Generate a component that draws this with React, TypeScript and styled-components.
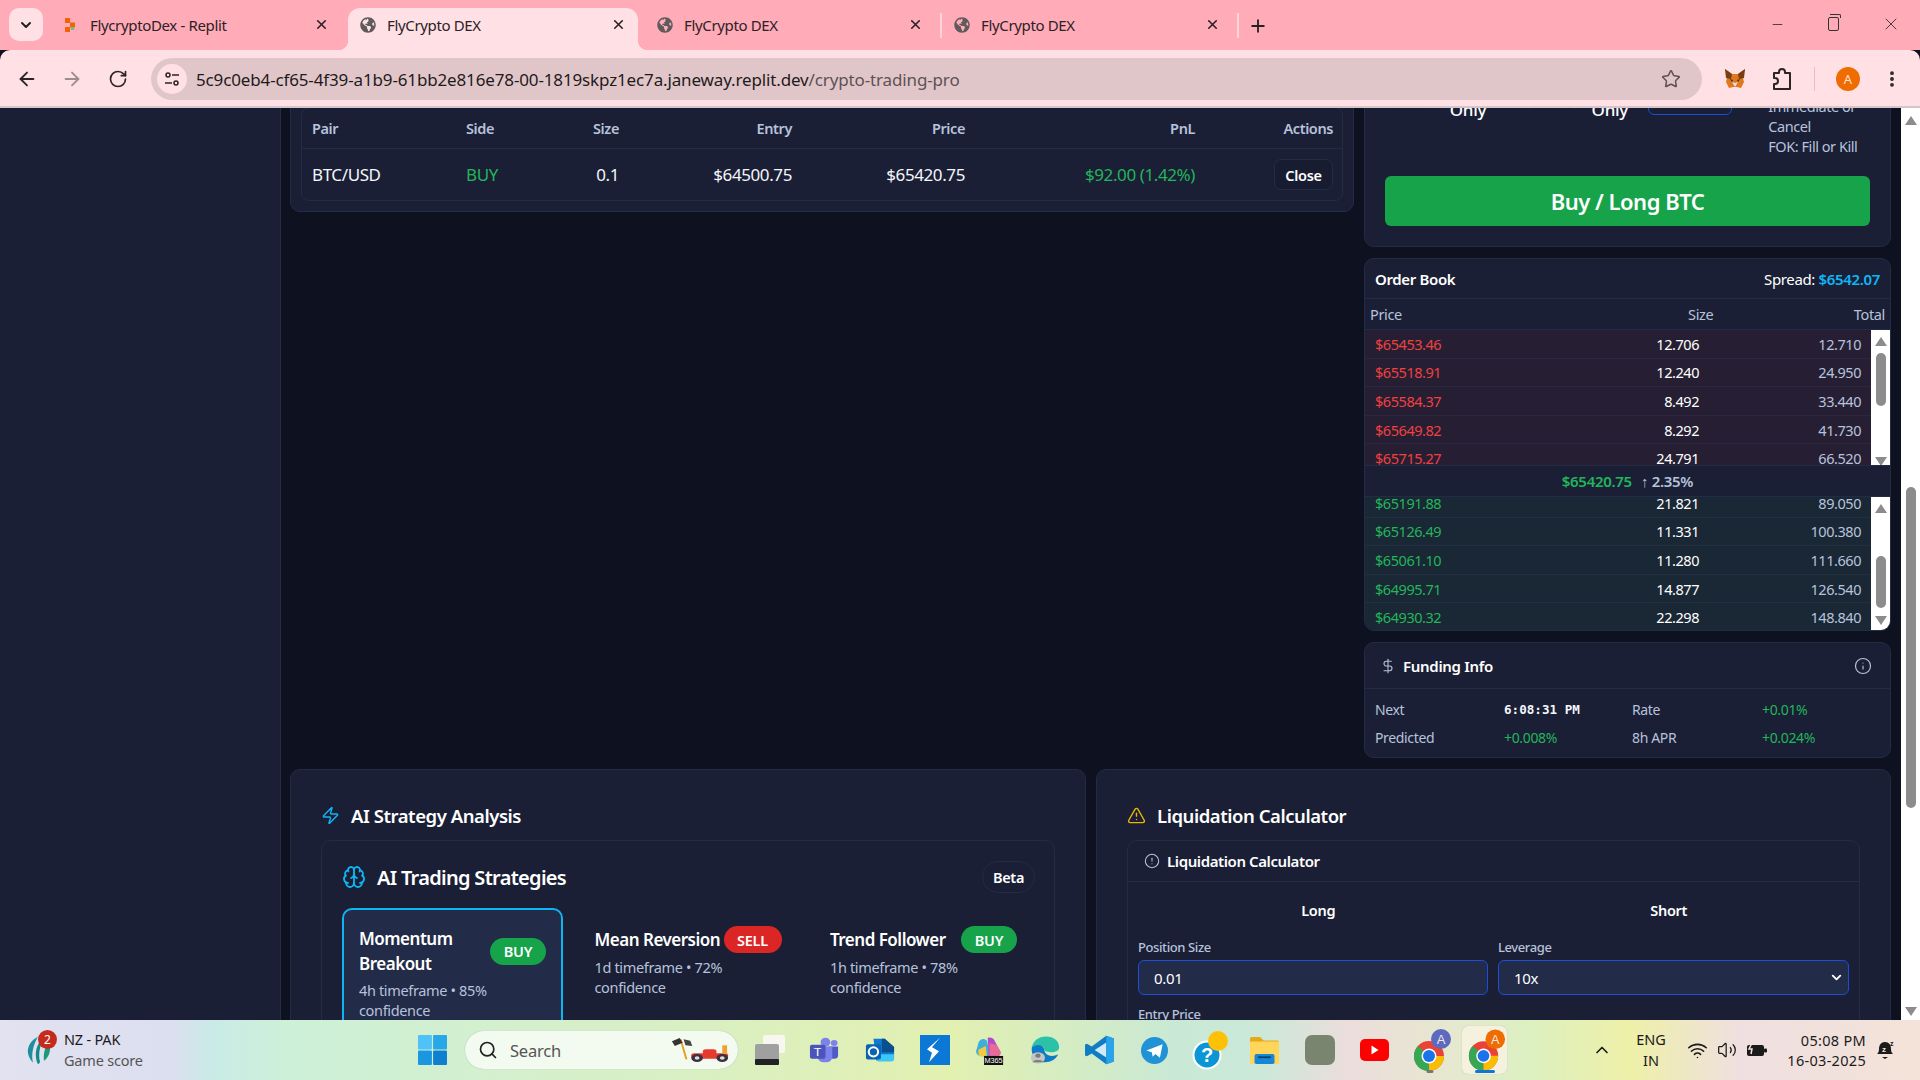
import React from 'react';
import styled, { createGlobalStyle } from 'styled-components';
import { ArrowLeft, ArrowRight, RotateCw, Star, MoreVertical, X, Plus, Minus, ChevronDown, ChevronUp, Zap, Brain, TriangleAlert, CircleAlert, Info, DollarSign, Search as SearchIcon, Wifi, Volume2 } from 'lucide-react';
import { FaGlobeAmericas } from 'react-icons/fa';

const Global = createGlobalStyle`
  html, body { margin: 0; padding: 0; background: #0e1220; }
  * { box-sizing: border-box; }
  body { font-family: "Noto Sans", sans-serif; overflow: hidden; }
`;

const Screen = styled.div`
  width: 1920px; height: 1080px; overflow: hidden;
  display: grid; grid-template-rows: 50px 58px 912px 60px;
`;

/* ---------- browser chrome ---------- */
const TabStrip = styled.div`
  background: #ffabb8; display: flex; align-items: flex-end; padding-left: 9px; position: relative;
`;
const GroupButton = styled.div`
  width: 34px; height: 33px; margin: 0 8px 9px 0; border-radius: 10px; background: #ffe0e5;
  display: flex; align-items: center; justify-content: center; color: #222;
`;
const Tab = styled.div<{ $active?: boolean; $sep?: boolean }>`
  width: ${p => (p.$active ? 290 : 297)}px; height: 42px; display: flex; align-items: center;
  padding: 0 ${p => (p.$active ? 12 : 19)}px 9px 12px; gap: 11px;
  margin-right: ${p => (p.$active ? 7 : 0)}px;
  font-size: 15px; letter-spacing: -0.35px; color: #2c2226; position: relative;
  background: ${p => (p.$active ? '#ffe0e5' : 'transparent')};
  border-radius: 12px 12px 0 0;
  ${p => p.$active ? `
    &::before, &::after { content: ''; position: absolute; bottom: 0; width: 10px; height: 10px; }
    &::before { left: -10px; background: radial-gradient(circle at 0 0, transparent 10px, #ffe0e5 10.5px); }
    &::after { right: -10px; background: radial-gradient(circle at 100% 0, transparent 10px, #ffe0e5 10.5px); }
  ` : ''}
  ${p => p.$sep ? `&::after { content: ''; position: absolute; right: 0; top: 5px; width: 2px; height: 25px; background: #ffd4db; }` : ''}
`;
const TabTitle = styled.span` flex: 1; `;
const NewTab = styled.div` margin: 0 0 11px 9px; display: flex; color: #222; height: 26px; align-items: center; `;
const WindowControls = styled.div`
  margin-left: auto; display: flex; align-self: flex-start; color: #333; height: 48px; align-items: center;
`;
const WindowButton = styled.div<{ $w: number }>`
  width: ${p => p.$w}px; display: flex; justify-content: center; align-items: center;
`;
const RestoreGlyph = styled.div`
  width: 11px; height: 14px; border: 1.4px solid #333; border-radius: 2px; position: relative;
  &::before { content: ''; position: absolute; left: 1px; top: -4px; width: 10px; height: 3px; border: 1.2px solid #333; border-bottom: 0; border-left: 0; border-radius: 0 2px 0 0; }
`;
const Toolbar = styled.div`
  background: #ffe0e5; border-radius: 10px 10px 0 0; border-bottom: 2px solid #d8c5c9;
  display: flex; align-items: center; color: #2b2326; padding: 2px 0 0 16px;
`;
const NavIcon = styled.div<{ $dim?: boolean; $w: number }>`
  width: ${p => p.$w}px; display: flex; justify-content: flex-start; color: ${p => (p.$dim ? '#9c8d90' : '#2b2326')};
`;
const AddressBar = styled.div`
  width: 1551px; height: 42px; border-radius: 21px; background: #e1c6c9;
  display: flex; align-items: center; padding: 0 21px 0 6px; font-size: 17px; letter-spacing: -0.14px; color: #1f1a1b;
`;
const SiteChip = styled.div`
  width: 30px; height: 30px; border-radius: 50%; background: #ffe0e5; display: flex; align-items: center; justify-content: center; margin-right: 9px;
`;
const UrlPath = styled.span` color: #5d5254; `;
const StarSlot = styled.div` margin-left: auto; display: flex; color: #5d5254; `;
const ExtArea = styled.div` display: flex; align-items: center; margin-left: 22px; `;
const ExtSlot = styled.div<{ $w: number }>` width: ${p => p.$w}px; display: flex; align-items: center; `;
const ToolbarDivider = styled.div` width: 1px; height: 24px; background: #f5b9c3; margin: 0 21px 0 14px; `;
const Avatar = styled.div`
  width: 24px; height: 24px; border-radius: 50%; background: #ef6c00; color: #ffe0d0; font-size: 13px; display: flex; align-items: center; justify-content: center; margin-right: 22px;
`;

/* ---------- page ---------- */
const Page = styled.div` display: grid; grid-template-columns: 281px 1fr 19px; min-height: 0; overflow: hidden; background: #0e1220; `;
const Sidebar = styled.div` background: #1a1f35; border-right: 1px solid #242b45; `;
const Viewport = styled.div` overflow: hidden; padding: 0 11px 0 9px; `;
const Scrolled = styled.div` margin-top: -60px; display: flex; flex-direction: column; gap: 11px; `;
const TopGrid = styled.div` display: grid; grid-template-columns: 1064px 527px; gap: 10px; align-items: start; `;
const RightCol = styled.div` display: flex; flex-direction: column; gap: 11px; `;
const Card = styled.div`
  background: #1a1f35; border: 1px solid #242b45; border-radius: 10px; color: #fff; overflow: hidden;
`;
const PositionsCard = styled(Card)` padding: 10px 10px 10px 10px; `;
const PositionsTitle = styled.div` height: 48px; font-size: 18px; font-weight: 600; `;
const TableBox = styled.div` border: 1px solid #242b45; border-radius: 8px; `;
const TableRow = styled.div<{ $head?: boolean }>`
  display: grid; grid-template-columns: 154px 84px 87px 173px 173px 230px 138px;
  align-items: center; height: ${p => (p.$head ? 41 : 51)}px; font-size: ${p => (p.$head ? 14.5 : 17)}px; letter-spacing: -0.4px;
  ${p => p.$head ? `font-weight: 600; color: #b7c2dc; border-bottom: 1px solid #242b45;` : `color: #f4f6fb;`}
`;
const Cell = styled.div<{ $right?: boolean; $green?: boolean }>`
  padding: 0 8px 0 10px; text-align: ${p => (p.$right ? 'right' : 'left')}; ${p => p.$green ? 'color: #22b55a;' : ''}
`;
const CloseButton = styled.button`
  font: 600 14.5px "Noto Sans", sans-serif; letter-spacing: -0.3px; color: #fff; background: #171c30; border: 1px solid #242b45; border-radius: 7px;
  width: 59px; height: 31px; padding: 0;
`;

const FormCard = styled(Card)` padding: 48px 20px 20px; `;
const OptionRow = styled.div` display: flex; align-items: flex-start; padding-left: 4px; height: 60px; `;
const OptionGroup = styled.div<{ $w: number }>` display: flex; width: ${p => p.$w}px; `;
const Toggle = styled.div` width: 43px; height: 13px; background: #171c30; border-radius: 6px; `;
const OptionLabel = styled.div`
  width: 72px; text-align: center; font-size: 17px; font-weight: 500; line-height: 20px; margin-top: -17px; letter-spacing: -.3px;
`;
const TifSelect = styled.div` width: 86px; height: 18px; border: 1px solid #1d4ed8; border-radius: 6px; background: #1a1f35; `;
const HelpText = styled.div` width: 104px; margin: -1px 0 0 36px; font-size: 14.5px; line-height: 20px; color: #b7c2dc; letter-spacing: -.45px; white-space: nowrap; `;
const SubmitButton = styled.button`
  width: 100%; height: 50px; margin-top: 19px; background: #16a34a; border: 0; border-radius: 6px; color: #fff;
  font: 600 22px "Noto Sans", sans-serif; letter-spacing: -0.5px;
`;

const BookHeader = styled.div`
  height: 40px; border-bottom: 1px solid #242b45; display: flex; justify-content: space-between; align-items: center; padding: 0 10px; font-size: 15px; letter-spacing: -0.35px;
`;
const BookTitle = styled.span` font-weight: 600; `;
const Cyan = styled.span` color: #10b5f5; font-weight: 600; `;
const ThreeCols = styled.div`
  display: grid; grid-template-columns: repeat(3, 1fr); align-items: center;
`;
const BookColumns = styled(ThreeCols)`
  height: 31px; padding: 0 5px; font-size: 14.5px; letter-spacing: -0.35px; color: #b7c2dc; border-bottom: 1px solid #242b45;
`;
const Right = styled.div` text-align: right; `;
const BookSide = styled.div<{ $h: number }>` display: grid; grid-template-columns: 1fr 19px; height: ${p => p.$h}px; overflow: hidden; `;
const BookRows = styled.div<{ $shift?: number }>` margin-top: ${p => p.$shift ?? 0}px; `;
const BookRow = styled(ThreeCols)<{ $ask?: boolean }>`
  height: 28.6px; padding: 0 10px; font-size: 14.5px; letter-spacing: -0.45px;
  background: ${p => (p.$ask ? '#261f33' : '#1a2735')};
  border-bottom: 1px solid ${p => (p.$ask ? '#2d2640' : '#222f42')};
`;
const BookPrice = styled.div<{ $ask?: boolean }>` color: ${p => (p.$ask ? '#f04040' : '#22b55a')}; `;
const BookTotal = styled(Right)` color: #b7c2dc; `;
const BookMid = styled.div`
  height: 32px; border-top: 1px solid #242b45; border-bottom: 1px solid #242b45; display: flex; align-items: center; justify-content: center; gap: 9px;
  font-size: 15px; font-weight: 600; letter-spacing: -0.3px; color: #b7c2dc; padding-right: 0;
`;
const MidPrice = styled.span` color: #22b55a; `;
const ScrollTrack = styled.div` background: #fff; display: grid; grid-template-rows: 22px 1fr 22px; justify-items: center; align-items: center; min-height: 0; `;
const ScrollThumb = styled.div<{ $top: number; $len: number }>`
  width: 10px; height: ${p => p.$len}px; margin-top: ${p => p.$top}px; align-self: start; background: #8c8c8c; border-radius: 5px;
`;
const Arrow = styled.div<{ $down?: boolean }>`
  width: 0; height: 0; border-left: 6.5px solid transparent; border-right: 6.5px solid transparent;
  ${p => (p.$down ? 'border-top: 9px solid #8c8c8c;' : 'border-bottom: 9px solid #8c8c8c;')}
`;
const PageScrollbar = styled(ScrollTrack)` grid-template-rows: 24px 1fr 18px; `;

const FundingHeader = styled.div`
  height: 46px; border-bottom: 1px solid #242b45; display: flex; align-items: center; padding: 0 18px 0 15px; gap: 7px;
  font-size: 15px; font-weight: 600; letter-spacing: -0.3px; color: #b7c2dc;
`;
const FundingTitle = styled.span` color: #fff; flex: 1; `;
const FundingGrid = styled.div`
  display: grid; grid-template-columns: 129px 128px 130px 1fr; grid-auto-rows: 28px; align-items: center; padding: 6px 10px 6px; font-size: 14px; letter-spacing: -0.35px; color: #b7c2dc;
`;
const GreenValue = styled.div` color: #22b55a; `;
const Clock = styled.div` font: 700 12.6px "DejaVu Sans Mono", monospace; letter-spacing: 0; color: #f4f6fb; `;

const BottomGrid = styled.div` display: grid; grid-template-columns: 796px 795px; gap: 10px; height: 300px; `;
const LargeCard = styled(Card)` padding: 29px 30px 0 30px; `;
const LargeTitle = styled.div`
  display: flex; align-items: center; gap: 11px; font-size: 18.5px; font-weight: 600; height: 32px; letter-spacing: -0.45px;
`;
const InnerCard = styled.div`
  margin-top: 9px; border: 1px solid #242b45; border-radius: 10px; height: 300px;
`;
const StrategyHeader = styled.div`
  display: flex; align-items: center; justify-content: space-between; padding: 19px 19px 14px 20px; height: 67px;
`;
const StrategyTitle = styled.div` display: flex; align-items: center; gap: 11px; font-size: 20px; font-weight: 600; letter-spacing: -0.7px; `;
const BetaBadge = styled.div`
  width: 53px; height: 32px; border: 1px solid #242b45; border-radius: 16px; display: flex; align-items: center; justify-content: center; font-size: 14.5px; font-weight: 600; letter-spacing: -.3px;
`;
const StrategyGrid = styled.div` display: grid; grid-template-columns: repeat(3, 221px); gap: 14.5px; padding: 0 20px; `;
const StrategyCard = styled.div<{ $selected?: boolean }>`
  border-radius: 10px; padding: 16px 15px; height: 140px; border: 2px solid ${p => (p.$selected ? '#0fb5f0' : 'transparent')};
  background: ${p => (p.$selected ? '#222b47' : 'transparent')};
`;
const StrategyHead = styled.div` display: flex; justify-content: space-between; align-items: center; gap: 2px; `;
const StrategyName = styled.div` font-size: 17px; font-weight: 600; line-height: 25px; letter-spacing: -0.5px; `;
const SignalBadge = styled.div<{ $sell?: boolean }>`
  flex: none; width: ${p => (p.$sell ? 58 : 56)}px; height: 27px; border-radius: 14px; background: ${p => (p.$sell ? '#dc2626' : '#16a34a')};
  display: flex; align-items: center; justify-content: center; font-size: 14.5px; font-weight: 600; letter-spacing: -.2px;
`;
const StrategyMeta = styled.div` margin-top: 4px; font-size: 14.5px; line-height: 20px; color: #b7c2dc; letter-spacing: -0.35px; `;

const LiqHeader = styled.div`
  height: 41px; border-bottom: 1px solid #242b45; display: flex; align-items: center; gap: 7px; padding: 0 16px; font-size: 15px; font-weight: 600; letter-spacing: -0.4px;
`;
const LiqBody = styled.div` padding: 0 10px; `;
const LiqTabs = styled.div`
  display: grid; grid-template-columns: 1fr 1fr; margin: 0 5px; height: 56px; align-items: center; text-align: center; font-size: 14.5px; font-weight: 600; letter-spacing: -.3px;
`;
const LiqFields = styled.div` display: grid; grid-template-columns: 350px 351px; gap: 10px 10px; `;
const Field = styled.div` display: flex; flex-direction: column; `;
const FieldLabel = styled.div` font-size: 13px; font-weight: 500; line-height: 18px; color: #b7c2dc; letter-spacing: -0.4px; margin-bottom: 4px; `;
const FieldBox = styled.div`
  height: 35px; border: 1px solid #1d4ed8; border-radius: 6px; background: #222b47; display: flex; align-items: center; justify-content: space-between;
  padding: 0 4px 0 15px; font-size: 15px; letter-spacing: -.3px;
`;

/* ---------- taskbar ---------- */
const Taskbar = styled.div`
  display: flex; align-items: center; position: relative;
  background: linear-gradient(90deg, #e2e2f0 0, #dcdff0 170px, #c9ebe6 215px, #cdf0d8 290px, #d8efc6 650px, #e2f0b0 950px, #c9e9d6 1180px, #cbe8d8 1260px, #ecdddc 1350px, #e6e8cf 1450px, #dcf0c0 1530px, #eef0a8 1630px, #efdfe0 1740px, #f3e3d8 1920px);
`;
const WidgetArea = styled.div` width: 405px; display: flex; align-items: center; padding-left: 26px; gap: 12px; `;
const WidgetLogo = styled.div` position: relative; width: 26px; height: 40px; display: flex; align-items: center; `;
const NotifBadge = styled.div`
  position: absolute; left: 12px; top: 0; width: 19px; height: 19px; border-radius: 50%; background: #c42b1c; color: #fff; font-size: 12px; display: flex; align-items: center; justify-content: center;
`;
const WidgetText = styled.div` font-size: 14.5px; line-height: 21px; color: #1b1b1b; letter-spacing: -.2px; `;
const WidgetSub = styled.div` color: #555; `;
const StartSlot = styled.div` width: 55px; margin-right: 5px; display: flex; justify-content: center; `;
const SearchPill = styled.div`
  width: 273px; height: 38px; margin-right: 4px; border-radius: 19px; background: #f3faf0; box-shadow: 0 0 1px #9aa; display: flex; align-items: center; padding: 0 8px 0 13px; gap: 12px; font-size: 16.5px; color: #555; letter-spacing: -.2px;
`;
const SearchLabel = styled.span` flex: 1; `;
const AppSlot = styled.div<{ $active?: boolean }>`
  width: ${p => (p.$active ? 45 : 55)}px; height: ${p => (p.$active ? 48 : 56)}px; margin: 0 ${p => (p.$active ? 5 : 0)}px;
  display: flex; align-items: center; justify-content: center; position: relative; border-radius: 6px;
  ${p => p.$active ? 'background: #f5f1df; box-shadow: 0 0 1px #aaa;' : ''}
`;
const RunDot = styled.div<{ $active?: boolean }>`
  position: absolute; left: 50%; bottom: ${p => (p.$active ? 1 : 5)}px; transform: translateX(-50%); height: 3px; border-radius: 2px;
  width: ${p => (p.$active ? 20 : 7)}px; background: ${p => (p.$active ? '#0a78d4' : '#777')};
`;
const Tray = styled.div` margin-left: 80px; display: flex; align-items: center; color: #1b1b1b; `;
const LangBlock = styled.div` width: 62px; margin-left: 8px; text-align: center; font-size: 14.5px; line-height: 21px; `;
const TraySlot = styled.div<{ $w: number }>` width: ${p => p.$w}px; display: flex; justify-content: center; align-items: center; `;
const ClockBlock = styled.div` width: 88px; margin-left: 6px; text-align: right; font-size: 14.5px; line-height: 20px; letter-spacing: .3px; white-space: nowrap; `;

/* ---------- drawings ---------- */
const ReplitLogo = () => (
  <svg width="16" height="16" viewBox="0 0 16 16"><rect x="2" y="1" width="5" height="5" fill="#f26207"/><rect x="7" y="5.5" width="5" height="5" fill="#f26207"/><rect x="2" y="10" width="5" height="5" fill="#f26207"/><rect x="8" y="10" width="3" height="3" fill="#5fc77a"/></svg>
);
const TuneIcon = () => (
  <svg width="16" height="16" viewBox="0 0 16 16" fill="none" stroke="#2b2326" strokeWidth="1.5"><circle cx="4" cy="4" r="2"/><path d="M8 4h7M1 12h7"/><circle cx="12" cy="12" r="2"/></svg>
);
const Fox = () => (
  <svg width="22" height="22" viewBox="0 0 22 22"><path d="M1 1l7 5h6l7-5-2 9 1 4-3 6-4-1h-4l-4 1-3-6 1-4z" fill="#e2761b"/><path d="M1 1l7 5-1 5-5-1zM21 1l-7 5 1 5 5-1z" fill="#763d16"/><path d="M8 14l3 5 3-5-3 1z" fill="#e4e4e4"/><path d="M6 11l3 1-1 2zM16 11l-3 1 1 2z" fill="#233447"/></svg>
);
const ChromePuzzle = () => (
  <svg width="24" height="24" viewBox="0 0 24 24" fill="none" stroke="#2b2326" strokeWidth="2" strokeLinejoin="round"><path d="M4 6h5V5a3 3 0 016 0v1h5v16H4v-5h1a3 3 0 000-6H4z"/></svg>
);
const CricketLogo = () => (
  <svg width="26" height="30" viewBox="0 0 26 36" preserveAspectRatio="none"><path d="M12 2C5 6 1 14 2 22c.5 4 3 9 5 11C5 24 7 12 12 2z" fill="#1f8fa0"/><path d="M18 3c-6 5-9 15-8 24 .2 3 1 6 2 8 1-1 2-2 2-3-2-9 0-20 4-29z" fill="#148a86"/><path d="M23 8c-4 6-6 14-5 23 3-3 6-8 6-14 0-3 0-6-1-9z" fill="#1a9a7a"/></svg>
);
const WinLogo = () => (
  <svg width="29" height="30" viewBox="0 0 30 30" preserveAspectRatio="none"><rect x="0" y="0" width="14.4" height="14.4" rx="1" fill="#4fc3f7"/><rect x="15.6" y="0" width="14.4" height="14.4" rx="1" fill="#29a8e8"/><rect x="0" y="15.6" width="14.4" height="14.4" rx="1" fill="#1a97e0"/><rect x="15.6" y="15.6" width="14.4" height="14.4" rx="1" fill="#0f7fd0"/></svg>
);
const RaceCar = () => (
  <svg width="60" height="28" viewBox="0 0 62 42" preserveAspectRatio="none"><path d="M11 5l6 30" stroke="#e0a020" strokeWidth="2"/><path d="M2 8l8-5 3 7-8 5z" fill="#333"/><path d="M14 5l7 2 2 8-7-1z" fill="#444"/><rect x="22" y="26" width="38" height="8" rx="3" fill="#e63a2e"/><rect x="34" y="20" width="14" height="8" rx="3" fill="#e63a2e"/><rect x="54" y="14" width="5" height="13" fill="#f0a030"/><circle cx="28" cy="33" r="6" fill="#3a2f3f"/><circle cx="28" cy="33" r="2.5" fill="#ddd"/><circle cx="54" cy="33" r="6" fill="#3a2f3f"/><circle cx="54" cy="33" r="2.5" fill="#ddd"/></svg>
);
const WidgetsTile = () => (
  <svg width="30" height="30" viewBox="0 0 30 30"><rect x="8" y="0" width="22" height="18" rx="2" fill="#f7f7f0"/><rect x="0" y="9" width="24" height="20" rx="2" fill="#a0a0a0"/><rect x="0" y="24" width="24" height="6" rx="1" fill="#222"/></svg>
);
const Teams = () => (
  <svg width="31" height="28" viewBox="0 0 32 32" preserveAspectRatio="none"><circle cx="26" cy="8" r="3.5" fill="#7b83eb"/><circle cx="17" cy="7" r="5" fill="#7b83eb"/><path d="M20 12h10v10a4 4 0 01-4 4h-2z" fill="#5059c9"/><path d="M9 12h15v12a6 6 0 01-6 6h-3a6 6 0 01-6-6z" fill="#7b83eb"/><rect x="1" y="10" width="16" height="16" rx="2" fill="#4b53bc"/><text x="9" y="23" fontSize="13" fill="#fff" textAnchor="middle" fontFamily="Liberation Sans">T</text></svg>
);
const Outlook = () => (
  <svg width="30" height="29" viewBox="0 0 32 32" preserveAspectRatio="none"><path d="M9 3l12 0 10 9v12a3 3 0 01-3 3H12z" fill="#0f78d4"/><path d="M10 20h21v5a3 3 0 01-3 3H14z" fill="#3cc8f5"/><path d="M18 3h3l10 9v6H18z" fill="#0a4e8c"/><rect x="1" y="9" width="16" height="17" rx="2" fill="#0a64b4"/><circle cx="9" cy="17.5" r="5" fill="none" stroke="#fff" strokeWidth="2.2"/></svg>
);
const BlueS = () => (
  <svg width="30" height="30" viewBox="0 0 30 44" preserveAspectRatio="none"><rect width="30" height="44" fill="#0a78d4"/><path d="M20 4l-8 14 7 6-10 16 3-14-5-5z" fill="#fff"/></svg>
);
const M365 = () => (
  <svg width="31" height="29" viewBox="0 0 32 32"><path d="M4 7c2-4 6-5 9-2l4 17H8c-6 0-8-4-6-8z" fill="#3bb0d9"/><path d="M14 2c4-1 7 1 8 4l6 11c1 4-2 6-6 6h-7z" fill="#b04bd0"/><path d="M16 8l8 2 4 7c1 3-2 6-6 6h-6z" fill="#e96a9a"/><path d="M4 15l8-4 1 12H8c-4 0-5-4-4-8z" fill="#f5c842"/><rect x="10" y="22" width="21" height="10" fill="#111"/><text x="20.5" y="30" fontSize="8" fill="#fff" textAnchor="middle" fontFamily="Liberation Sans">M365</text></svg>
);
const Edge = () => (
  <svg width="30" height="30" viewBox="0 0 34 42" preserveAspectRatio="none"><path d="M2 18C3 8 10 2 18 2c9 0 15 6 15 15 0 5-4 7-9 7-6 0-8-2-8-4 0-4-4-6-8-4-3 1-5 3-6 2z" fill="#2cc2a8"/><path d="M2 18c3-4 8-5 11-3 4 2 2 8 6 12 3 3 8 3 13 0-3 8-10 12-17 11C7 37 1 28 2 18z" fill="#0c7cc7"/><circle cx="9" cy="32" r="8" fill="#c5c5c5"/><circle cx="9" cy="29" r="3" fill="#7b7b7b"/><path d="M3 38c1-4 11-4 12 0z" fill="#7b7b7b"/></svg>
);
const VSCode = () => (
  <svg width="29" height="30" viewBox="0 0 30 44" preserveAspectRatio="none"><path d="M22 1l8 4v34l-8 4L7 27 2 31l-2-1V14l2-1 5 4z" fill="#0f7cc4"/><path d="M22 11L10 22l12 11z" fill="#cfeaf8"/><path d="M22 1l8 4v34l-8 4z" fill="#2aa4e8"/></svg>
);
const Telegram = () => (
  <svg width="27" height="27" viewBox="0 0 30 30"><circle cx="15" cy="15" r="15" fill="#1f93d6"/><path d="M6 15l18-7-3 15-5-4-3 3-1-5z" fill="#fff"/></svg>
);
const HelpApp = () => (
  <svg width="36" height="40" viewBox="0 0 36 40"><circle cx="15" cy="25" r="13.5" fill="#0a96d6" stroke="#fff" strokeWidth="2"/><text x="15" y="32" fontSize="20" fontWeight="700" fill="#fff" textAnchor="middle" fontFamily="Liberation Sans">?</text><circle cx="26" cy="11" r="10" fill="#ffc107"/></svg>
);
const Folder = () => (
  <svg width="29" height="27" viewBox="0 0 32 30" preserveAspectRatio="none"><path d="M0 2a2 2 0 012-2h9l4 4h15a2 2 0 012 2v5H0z" fill="#e6a817"/><rect y="5" width="32" height="25" rx="1" fill="#ffd55a"/><rect x="5" y="19" width="22" height="11" rx="2" fill="#1587d6"/><rect x="9" y="21.5" width="14" height="2" fill="#0b3f70"/></svg>
);
const GreyTile = styled.div` width: 30px; height: 30px; border-radius: 7px; background: #7a8570; `;
const YouTube = () => (
  <svg width="29" height="22" viewBox="0 0 29 22"><rect width="29" height="22" rx="5" fill="#f00"/><path d="M11.5 6.5l7 4.5-7 4.5z" fill="#fff"/></svg>
);
const ChromeBadged = ({ color }: { color: string }) => (
  <svg width="46" height="42" viewBox="0 0 46 42"><circle cx="22" cy="27" r="15" fill="#ea4335"/><path d="M22 27L9 35a15 15 0 0013 7z" fill="#34a853"/><path d="M22 42a15 15 0 0015-15H22z" fill="#fbbc04"/><path d="M9 35a15 15 0 01-2-8 15 15 0 014-10l11 10z" fill="#34a853"/><circle cx="22" cy="27" r="7.5" fill="#fff"/><circle cx="22" cy="27" r="6" fill="#1a73e8"/><circle cx="34" cy="10" r="10" fill={color}/><text x="34" y="15" fontSize="13" fill="#f4e4e4" textAnchor="middle" fontFamily="Liberation Sans">A</text></svg>
);
const Battery = () => (
  <svg width="22" height="18" viewBox="0 0 22 18"><rect x="1" y="4" width="17" height="11" rx="2" fill="#1b1b1b"/><rect x="18" y="7.5" width="3" height="4" rx="1" fill="#1b1b1b"/><path d="M7 0L3 8h3l-1 5" stroke="#f3e3d8" strokeWidth="1.5" fill="none"/></svg>
);
const Bell = () => (
  <svg width="18" height="20" viewBox="0 0 18 20"><path d="M9 2c-4 0-6 3-6 7 0 3-1 4-2 5h16c-1-1-2-2-2-5 0-4-2-7-6-7z" fill="#1b1b1b"/><path d="M6 17h6l-3 2z" fill="#1b1b1b"/><text x="8" y="12" fontSize="8" fontWeight="700" fill="#f3e3d8" textAnchor="middle" fontFamily="Liberation Sans">z</text><text x="14" y="6" fontSize="7" fontWeight="700" fill="#1b1b1b" fontFamily="Liberation Sans">z</text></svg>
);

/* ---------- data ---------- */
const asks = [['$65453.46', '12.706', '12.710'], ['$65518.91', '12.240', '24.950'], ['$65584.37', '8.492', '33.440'], ['$65649.82', '8.292', '41.730'], ['$65715.27', '24.791', '66.520']];
const bids = [['$65191.88', '21.821', '89.050'], ['$65126.49', '11.331', '100.380'], ['$65061.10', '11.280', '111.660'], ['$64995.71', '14.877', '126.540'], ['$64930.32', '22.298', '148.840']];
const tabs = [
  { title: 'FlycryptoDex - Replit', replit: true },
  { title: 'FlyCrypto DEX', active: true },
  { title: 'FlyCrypto DEX', sep: true },
  { title: 'FlyCrypto DEX', sep: true },
];

const Scrollbar = ({ top, len }: { top: number; len: number }) => (
  <ScrollTrack><Arrow /><ScrollThumb $top={top} $len={len} /><Arrow $down /></ScrollTrack>
);

const Rows = ({ data, ask }: { data: string[][]; ask?: boolean }) => (
  <>
    {data.map(r => (
      <BookRow key={r[0]} $ask={ask}>
        <BookPrice $ask={ask}>{r[0]}</BookPrice>
        <Right>{r[1]}</Right>
        <BookTotal>{r[2]}</BookTotal>
      </BookRow>
    ))}
  </>
);

export default function App() {
  return (
    <Screen>
      <Global />
      <TabStrip>
        <GroupButton><ChevronDown size={16} strokeWidth={3} /></GroupButton>
        {tabs.map((t, i) => (
          <Tab key={i} $active={t.active} $sep={t.sep}>
            {t.replit ? <ReplitLogo /> : <FaGlobeAmericas size={16} color="#5f5a5c" />}
            <TabTitle>{t.title}</TabTitle>
            <X size={15} strokeWidth={2.6} />
          </Tab>
        ))}
        <NewTab><Plus size={20} strokeWidth={2.2} /></NewTab>
        <WindowControls>
          <WindowButton $w={55}><Minus size={15} strokeWidth={1.4} /></WindowButton>
          <WindowButton $w={57}><RestoreGlyph /></WindowButton>
          <WindowButton $w={58}><X size={20} strokeWidth={1.1} /></WindowButton>
        </WindowControls>
      </TabStrip>

      <Toolbar>
        <NavIcon $w={45}><ArrowLeft size={22} strokeWidth={2} /></NavIcon>
        <NavIcon $dim $w={47}><ArrowRight size={22} strokeWidth={2} /></NavIcon>
        <NavIcon $w={43}><RotateCw size={20} strokeWidth={2} /></NavIcon>
        <AddressBar>
          <SiteChip><TuneIcon /></SiteChip>
          <span>5c9c0eb4-cf65-4f39-a1b9-61bb2e816e78-00-1819skpz1ec7a.janeway.replit.dev</span>
          <UrlPath>/crypto-trading-pro</UrlPath>
          <StarSlot><Star size={20} strokeWidth={1.8} /></StarSlot>
        </AddressBar>
        <ExtArea>
          <ExtSlot $w={46}><Fox /></ExtSlot>
          <ExtSlot $w={30}><ChromePuzzle /></ExtSlot>
          <ToolbarDivider />
          <Avatar>A</Avatar>
          <MoreVertical size={20} strokeWidth={2.6} />
        </ExtArea>
      </Toolbar>

      <Page>
        <Sidebar />
        <Viewport>
          <Scrolled>
            <TopGrid>
              <PositionsCard>
                <PositionsTitle>Open Positions</PositionsTitle>
                <TableBox>
                  <TableRow $head>
                    <Cell>Pair</Cell><Cell>Side</Cell><Cell $right>Size</Cell><Cell $right>Entry</Cell><Cell $right>Price</Cell><Cell $right>PnL</Cell><Cell $right>Actions</Cell>
                  </TableRow>
                  <TableRow>
                    <Cell>BTC/USD</Cell><Cell $green>BUY</Cell><Cell $right>0.1</Cell><Cell $right>$64500.75</Cell><Cell $right>$65420.75</Cell><Cell $right $green>$92.00 (1.42%)</Cell>
                    <Cell $right><CloseButton>Close</CloseButton></Cell>
                  </TableRow>
                </TableBox>
              </PositionsCard>

              <RightCol>
                <FormCard>
                  <OptionRow>
                    <OptionGroup $w={145}><Toggle /><OptionLabel>Post<br />Only</OptionLabel></OptionGroup>
                    <OptionGroup $w={120}><Toggle /><OptionLabel>Reduce<br />Only</OptionLabel></OptionGroup>
                    <TifSelect />
                    <HelpText>Immediate or<br />Cancel<br />FOK: Fill or Kill</HelpText>
                  </OptionRow>
                  <SubmitButton>Buy / Long BTC</SubmitButton>
                </FormCard>

                <Card>
                  <BookHeader>
                    <BookTitle>Order Book</BookTitle>
                    <span>Spread: <Cyan>$6542.07</Cyan></span>
                  </BookHeader>
                  <BookColumns><div>Price</div><Right>Size</Right><Right>Total</Right></BookColumns>
                  <BookSide $h={135}>
                    <BookRows><Rows data={asks} ask /></BookRows>
                    <Scrollbar top={1} len={53} />
                  </BookSide>
                  <BookMid><MidPrice>$65420.75</MidPrice><span>↑ 2.35%</span></BookMid>
                  <BookSide $h={133}>
                    <BookRows $shift={-8}><Rows data={bids} /></BookRows>
                    <Scrollbar top={37} len={52} />
                  </BookSide>
                </Card>

                <Card>
                  <FundingHeader>
                    <DollarSign size={16} strokeWidth={1.6} />
                    <FundingTitle>Funding Info</FundingTitle>
                    <Info size={18} strokeWidth={1.6} />
                  </FundingHeader>
                  <FundingGrid>
                    <div>Next</div><Clock>6:08:31 PM</Clock><div>Rate</div><GreenValue>+0.01%</GreenValue>
                    <div>Predicted</div><GreenValue>+0.008%</GreenValue><div>8h APR</div><GreenValue>+0.024%</GreenValue>
                  </FundingGrid>
                </Card>
              </RightCol>
            </TopGrid>

            <BottomGrid>
              <LargeCard>
                <LargeTitle><Zap size={19} strokeWidth={1.8} color="#0fb5f0" />AI Strategy Analysis</LargeTitle>
                <InnerCard>
                  <StrategyHeader>
                    <StrategyTitle><Brain size={24} strokeWidth={1.8} color="#0fb5f0" />AI Trading Strategies</StrategyTitle>
                    <BetaBadge>Beta</BetaBadge>
                  </StrategyHeader>
                  <StrategyGrid>
                    <StrategyCard $selected>
                      <StrategyHead><StrategyName>Momentum Breakout</StrategyName><SignalBadge>BUY</SignalBadge></StrategyHead>
                      <StrategyMeta>4h timeframe • 85% confidence</StrategyMeta>
                    </StrategyCard>
                    <StrategyCard>
                      <StrategyHead><StrategyName>Mean Reversion</StrategyName><SignalBadge $sell>SELL</SignalBadge></StrategyHead>
                      <StrategyMeta>1d timeframe • 72% confidence</StrategyMeta>
                    </StrategyCard>
                    <StrategyCard>
                      <StrategyHead><StrategyName>Trend Follower</StrategyName><SignalBadge>BUY</SignalBadge></StrategyHead>
                      <StrategyMeta>1h timeframe • 78% confidence</StrategyMeta>
                    </StrategyCard>
                  </StrategyGrid>
                </InnerCard>
              </LargeCard>

              <LargeCard>
                <LargeTitle><TriangleAlert size={19} strokeWidth={1.8} color="#eab308" />Liquidation Calculator</LargeTitle>
                <InnerCard>
                  <LiqHeader><CircleAlert size={16} strokeWidth={1.6} color="#b7c2dc" />Liquidation Calculator</LiqHeader>
                  <LiqBody>
                    <LiqTabs><div>Long</div><div>Short</div></LiqTabs>
                    <LiqFields>
                      <Field><FieldLabel>Position Size</FieldLabel><FieldBox>0.01</FieldBox></Field>
                      <Field><FieldLabel>Leverage</FieldLabel><FieldBox>10x<ChevronDown size={15} strokeWidth={3} /></FieldBox></Field>
                      <Field><FieldLabel>Entry Price</FieldLabel><FieldBox>65420.75</FieldBox></Field>
                    </LiqFields>
                  </LiqBody>
                </InnerCard>
              </LargeCard>
            </BottomGrid>
          </Scrolled>
        </Viewport>
        <PageScrollbar><Arrow /><ScrollThumb $top={355} $len={321} /><Arrow $down /></PageScrollbar>
      </Page>

      <Taskbar>
        <WidgetArea>
          <WidgetLogo><CricketLogo /><NotifBadge>2</NotifBadge></WidgetLogo>
          <WidgetText>NZ - PAK<WidgetSub>Game score</WidgetSub></WidgetText>
        </WidgetArea>
        <StartSlot><WinLogo /></StartSlot>
        <SearchPill>
          <SearchIcon size={20} strokeWidth={2} color="#222" />
          <SearchLabel>Search</SearchLabel>
          <RaceCar />
        </SearchPill>
        <AppSlot><WidgetsTile /></AppSlot>
        <AppSlot><Teams /></AppSlot>
        <AppSlot><Outlook /></AppSlot>
        <AppSlot><BlueS /></AppSlot>
        <AppSlot><M365 /></AppSlot>
        <AppSlot><Edge /></AppSlot>
        <AppSlot><VSCode /></AppSlot>
        <AppSlot><Telegram /></AppSlot>
        <AppSlot><HelpApp /></AppSlot>
        <AppSlot><Folder /></AppSlot>
        <AppSlot><GreyTile /></AppSlot>
        <AppSlot><YouTube /></AppSlot>
        <AppSlot><ChromeBadged color="#5c6bc0" /><RunDot /></AppSlot>
        <AppSlot $active><ChromeBadged color="#ef6c00" /><RunDot $active /></AppSlot>
        <Tray>
          <ChevronUp size={20} strokeWidth={2} />
          <LangBlock>ENG<br />IN</LangBlock>
          <TraySlot $w={30}><Wifi size={21} strokeWidth={1.8} /></TraySlot>
          <TraySlot $w={30}><Volume2 size={20} strokeWidth={1.5} /></TraySlot>
          <TraySlot $w={30}><Battery /></TraySlot>
          <ClockBlock>05:08 PM<br />16-03-2025</ClockBlock>
          <TraySlot $w={38}><Bell /></TraySlot>
        </Tray>
      </Taskbar>
    </Screen>
  );
}
